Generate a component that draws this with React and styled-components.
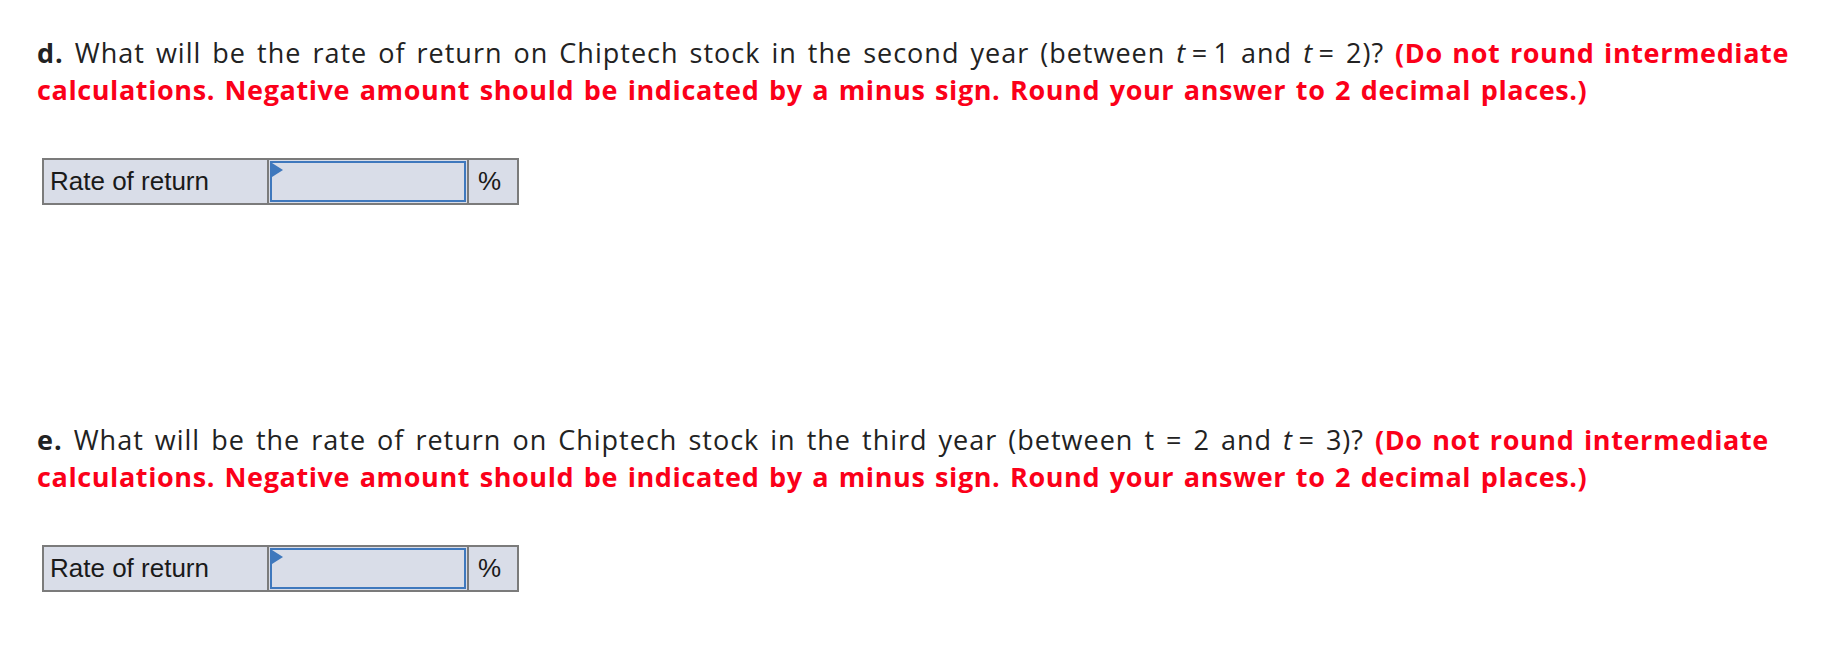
import React from 'react';
import styled, { createGlobalStyle } from 'styled-components';

const GlobalStyle = createGlobalStyle`
  html, body {
    margin: 0;
    padding: 0;
    background: #ffffff;
  }
  body {
    font-family: "Open Sans", Lato, sans-serif;
  }
`;

const Page = styled.div`
  width: 1842px;
  height: 658px;
  box-sizing: border-box;
  padding: 34px 0 0 37px;
  background: #ffffff;
  display: flex;
  flex-direction: column;
`;

const Part = styled.section`
  display: flex;
  flex-direction: column;
  margin-bottom: ${(props) => props.gap || '0'};
`;

const Question = styled.p`
  margin: 0;
  color: #222222;
  font-size: 27px;
  line-height: 37px;
  letter-spacing: 1px;
  word-spacing: 3px;
  width: 1780px;
`;

const Letter = styled.b`
  font-weight: 700;
`;

const Var = styled.i`
  font-style: italic;
`;

const Hint = styled.span`
  color: #fb0019;
  font-weight: 700;
  letter-spacing: 0.6px;
  word-spacing: 2px;
`;

const AnswerRow = styled.div`
  display: flex;
  width: 477px;
  height: 47px;
  margin: 50px 0 0 5px;
  box-sizing: border-box;
  border: 2px solid #7b7b7b;
  background: #d9dde8;
  font-family: "Liberation Sans", Arial, sans-serif;
  font-size: 26px;
  color: #1a1a1a;
`;

const Cell = styled.div`
  display: flex;
  align-items: center;
  box-sizing: border-box;
  width: ${(props) => props.w};
  padding: ${(props) => props.pad || '0'};
  border-right: ${(props) => (props.last ? 'none' : '2px solid #7b7b7b')};
`;

const InputBox = styled.div`
  position: relative;
  flex: 1;
  align-self: stretch;
  border: 2px solid #3f78bd;
  background: #d9dde8;
`;

const Flag = styled.span`
  position: absolute;
  top: 0;
  left: 0;
  width: 0;
  height: 0;
  border-top: 7px solid transparent;
  border-bottom: 7px solid transparent;
  border-left: 11px solid #3f78bd;
`;

const Answer = ({ label }) => (
  <AnswerRow>
    <Cell w="225px" pad="0 0 0 6px">
      {label}
    </Cell>
    <Cell w="200px" pad="1px">
      <InputBox>
        <Flag />
      </InputBox>
    </Cell>
    <Cell w="48px" pad="0 0 0 9px" last>
      %
    </Cell>
  </AnswerRow>
);

const hint =
  '(Do not round intermediate calculations. Negative amount should be indicated by a minus sign. Round your answer to 2 decimal places.)';

const App = () => (
  <>
    <GlobalStyle />
    <Page>
      <Part gap="216px">
        <Question>
          <Letter>d.</Letter> What will be the rate of return on Chiptech stock in the second year
          (between <Var>t</Var>&thinsp;=&thinsp;1 and <Var>t</Var>&thinsp;= 2)? <Hint>{hint}</Hint>
        </Question>
        <Answer label="Rate of return" />
      </Part>
      <Part>
        <Question>
          <Letter>e.</Letter> What will be the rate of return on Chiptech stock in the third year
          (between t = 2 and <Var>t</Var>&thinsp;= 3)? <Hint>{hint}</Hint>
        </Question>
        <Answer label="Rate of return" />
      </Part>
    </Page>
  </>
);

export default App;
